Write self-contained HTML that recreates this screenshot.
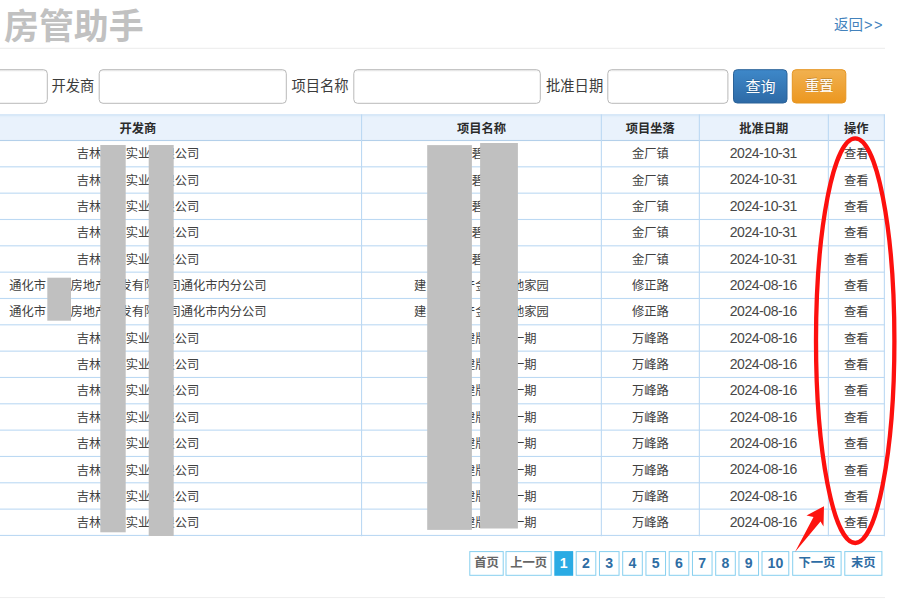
<!DOCTYPE html>
<html lang="zh-CN">
<head>
<meta charset="utf-8">
<title>房管助手</title>
<style>
html,body{margin:0;padding:0;background:#fff;}
body{width:900px;height:600px;overflow:hidden;position:relative;font-family:"Liberation Sans","Noto Sans CJK SC",sans-serif;color:#333;}
.abs{position:absolute;white-space:nowrap;transform-origin:0 0;}
.title{font-size:34.9px;font-weight:bold;color:#c1c1c1;line-height:50px;}
.back{font-size:14.5px;color:#4382bc;line-height:20px;}
.lbl{font-size:14.3px;color:#3c3c3c;line-height:20px;}
.btn{color:#fff;font-size:14.1px;line-height:32px;width:54px;text-align:center;text-shadow:0 -1px 0 rgba(0,0,0,.2);}
.c{position:absolute;text-align:center;white-space:nowrap;font-size:12.25px;line-height:26px;height:26px;color:#404040;transform-origin:0 0;}
.h{font-weight:bold;color:#2b2b2b;}
.d{font-size:14px;letter-spacing:-.45px;color:#474747;}
.pg{position:absolute;height:24px;text-align:center;font-size:12.3px;font-weight:bold;line-height:24px;color:#2e6da4;white-space:nowrap;transform-origin:0 0;}
.pg.n{font-size:14.1px;}
.pg.dis{color:#666;}
.pg.cur{color:#fff;}
svg{position:absolute;left:0;top:0;}
.fi{position:absolute;top:72px;height:28px;border:0;outline:0;padding:0;margin:0;background:transparent;font:inherit;font-size:14px;color:#555;}
</style>
</head>
<body>

<svg width="900" height="600" viewBox="0 0 900 600">
<defs>
<linearGradient id="gb" x1="0" y1="0" x2="0" y2="1"><stop offset="0" stop-color="#3e88c9"/><stop offset="1" stop-color="#2d6aa6"/></linearGradient>
<linearGradient id="go" x1="0" y1="0" x2="0" y2="1"><stop offset="0" stop-color="#f1b150"/><stop offset="1" stop-color="#ec971f"/></linearGradient>
<linearGradient id="gi" x1="0" y1="0" x2="0" y2="1"><stop offset="0" stop-color="#ececec"/><stop offset="0.08" stop-color="#ffffff"/><stop offset="1" stop-color="#ffffff"/></linearGradient>
</defs>
<rect x="0" y="47.8" width="885" height="1" fill="#ececec"/>
<rect x="0" y="597.1" width="885" height="1" fill="#eeeeee"/>
<rect x="-59.50" y="69.7" width="106.80" height="33.6" rx="3.8" fill="url(#gi)" stroke="#b9b9b9" stroke-width="1"/>
<rect x="99.20" y="69.7" width="187.10" height="33.6" rx="3.8" fill="url(#gi)" stroke="#b9b9b9" stroke-width="1"/>
<rect x="353.80" y="69.7" width="186.50" height="33.6" rx="3.8" fill="url(#gi)" stroke="#b9b9b9" stroke-width="1"/>
<rect x="607.80" y="69.7" width="120.10" height="33.6" rx="3.8" fill="url(#gi)" stroke="#b9b9b9" stroke-width="1"/>
<rect x="733.5" y="69.7" width="53.5" height="33.3" rx="3.8" fill="url(#gb)" stroke="#2b6298" stroke-width="1"/>
<rect x="792.3" y="69.7" width="53.5" height="33.3" rx="3.8" fill="url(#go)" stroke="#e59521" stroke-width="1"/>
<rect x="0" y="114.6" width="884.8" height="26" fill="#e9f2fc"/>
<rect x="0" y="114.4" width="884.8" height="1.2" fill="#c3dcf3"/>
<rect x="0" y="115.6" width="884.8" height="1.6" fill="#e3effb"/>
<rect x="0" y="139.95" width="884.8" height="1.1" fill="#b4d0ea"/>
<rect x="0" y="166.28" width="884.8" height="1.1" fill="#bcd9f3"/>
<rect x="0" y="192.61" width="884.8" height="1.1" fill="#bcd9f3"/>
<rect x="0" y="218.94" width="884.8" height="1.1" fill="#bcd9f3"/>
<rect x="0" y="245.27" width="884.8" height="1.1" fill="#bcd9f3"/>
<rect x="0" y="271.60" width="884.8" height="1.1" fill="#bcd9f3"/>
<rect x="0" y="297.93" width="884.8" height="1.1" fill="#bcd9f3"/>
<rect x="0" y="324.26" width="884.8" height="1.1" fill="#bcd9f3"/>
<rect x="0" y="350.59" width="884.8" height="1.1" fill="#bcd9f3"/>
<rect x="0" y="376.92" width="884.8" height="1.1" fill="#bcd9f3"/>
<rect x="0" y="403.25" width="884.8" height="1.1" fill="#bcd9f3"/>
<rect x="0" y="429.58" width="884.8" height="1.1" fill="#bcd9f3"/>
<rect x="0" y="455.91" width="884.8" height="1.1" fill="#bcd9f3"/>
<rect x="0" y="482.24" width="884.8" height="1.1" fill="#bcd9f3"/>
<rect x="0" y="508.57" width="884.8" height="1.1" fill="#bcd9f3"/>
<rect x="0" y="534.90" width="884.8" height="1.1" fill="#bcd9f3"/>
<rect x="361.00" y="114.4" width="1.1" height="421.85" fill="#bcd9f3"/>
<rect x="600.80" y="114.4" width="1.1" height="421.85" fill="#bcd9f3"/>
<rect x="698.80" y="114.4" width="1.1" height="421.85" fill="#bcd9f3"/>
<rect x="827.80" y="114.4" width="1.1" height="421.85" fill="#bcd9f3"/>
<rect x="883.80" y="114.4" width="1.1" height="421.85" fill="#bcd9f3"/>
<rect x="469.80" y="551.60" width="33.40" height="23.70" fill="#fff" stroke="#86cfef" stroke-width="1"/>
<rect x="506.00" y="551.60" width="45.20" height="23.70" fill="#fff" stroke="#86cfef" stroke-width="1"/>
<rect x="554.30" y="551.10" width="18.90" height="24.70" fill="#2aabe4"/>
<rect x="576.20" y="551.60" width="19.60" height="23.70" fill="#fff" stroke="#86cfef" stroke-width="1"/>
<rect x="599.45" y="551.60" width="19.60" height="23.70" fill="#fff" stroke="#86cfef" stroke-width="1"/>
<rect x="622.70" y="551.60" width="19.60" height="23.70" fill="#fff" stroke="#86cfef" stroke-width="1"/>
<rect x="645.95" y="551.60" width="19.60" height="23.70" fill="#fff" stroke="#86cfef" stroke-width="1"/>
<rect x="669.20" y="551.60" width="19.60" height="23.70" fill="#fff" stroke="#86cfef" stroke-width="1"/>
<rect x="692.45" y="551.60" width="19.60" height="23.70" fill="#fff" stroke="#86cfef" stroke-width="1"/>
<rect x="715.70" y="551.60" width="19.60" height="23.70" fill="#fff" stroke="#86cfef" stroke-width="1"/>
<rect x="738.95" y="551.60" width="19.60" height="23.70" fill="#fff" stroke="#86cfef" stroke-width="1"/>
<rect x="762.00" y="551.60" width="26.80" height="23.70" fill="#fff" stroke="#86cfef" stroke-width="1"/>
<rect x="792.70" y="551.60" width="48.40" height="23.70" fill="#fff" stroke="#86cfef" stroke-width="1"/>
<rect x="844.80" y="551.60" width="37.10" height="23.70" fill="#fff" stroke="#86cfef" stroke-width="1"/>
</svg>
<div class="abs title" style="left:4px;top:2px;transform:translate(0.00px,0.00px) rotate(.0002deg)">房管助手</div>
<div class="abs back" style="left:834px;top:14px;transform:translate(0.00px,0.50px) rotate(.0002deg)">返回<span style="letter-spacing:1.5px;margin-left:1px">&gt;&gt;</span></div>
<div class="abs lbl" style="left:51px;top:75px;transform:translate(0.50px,0.80px) rotate(.0002deg)">开发商</div>
<div class="abs lbl" style="left:291px;top:75px;transform:translate(0.40px,0.80px) rotate(.0002deg)">项目名称</div>
<div class="abs lbl" style="left:546px;top:75px;transform:translate(0.00px,0.80px) rotate(.0002deg)">批准日期</div>
<input class="fi" type="text" style="left:-54.0px;width:95.8px">
<input class="fi" type="text" style="left:104.7px;width:176.1px">
<input class="fi" type="text" style="left:359.3px;width:175.5px">
<input class="fi" type="text" style="left:613.3px;width:109.1px">
<div class="abs btn" style="left:733px;top:70px;transform:translate(0.50px,0.50px) rotate(.0002deg);font-size:15px">查询</div>
<div class="abs btn" style="left:792px;top:70px;transform:translate(0.30px,0.30px) rotate(.0002deg);font-size:14.3px">重置</div>
<div class="c h" style="left:-86px;top:115px;transform:translate(0.50px,0.70px) rotate(.0002deg);width:447.0px">开发商</div>
<div class="c h" style="left:361px;top:115px;transform:translate(0.50px,0.70px) rotate(.0002deg);width:239.8px">项目名称</div>
<div class="c h" style="left:601px;top:115px;transform:translate(0.30px,0.70px) rotate(.0002deg);width:98.0px">项目坐落</div>
<div class="c h" style="left:699px;top:115px;transform:translate(0.30px,0.70px) rotate(.0002deg);width:129.0px">批准日期</div>
<div class="c h" style="left:828px;top:115px;transform:translate(0.30px,0.70px) rotate(.0002deg);width:56.0px">操作</div>
<div class="c" style="left:-86px;top:141px;transform:translate(0.50px,0.30px) rotate(.0002deg);width:447.0px">吉林某某实业有限公司</div>
<div class="c" style="left:364px;top:141px;transform:translate(0.00px,0.30px) rotate(.0002deg);width:239.8px">某碧桂园</div>
<div class="c" style="left:601px;top:141px;transform:translate(0.30px,0.30px) rotate(.0002deg);width:98.0px">金厂镇</div>
<div class="c d" style="left:698px;top:140px;transform:translate(0.80px,0.10px) rotate(.0002deg);width:129.0px">2024-10-31</div>
<div class="c" style="left:828px;top:141px;transform:translate(0.30px,0.30px) rotate(.0002deg);width:56.0px">查看</div>
<div class="c" style="left:-86px;top:167px;transform:translate(0.50px,0.65px) rotate(.0002deg);width:447.0px">吉林某某实业有限公司</div>
<div class="c" style="left:364px;top:167px;transform:translate(0.00px,0.65px) rotate(.0002deg);width:239.8px">某碧桂园</div>
<div class="c" style="left:601px;top:167px;transform:translate(0.30px,0.65px) rotate(.0002deg);width:98.0px">金厂镇</div>
<div class="c d" style="left:698px;top:166px;transform:translate(0.80px,0.45px) rotate(.0002deg);width:129.0px">2024-10-31</div>
<div class="c" style="left:828px;top:167px;transform:translate(0.30px,0.65px) rotate(.0002deg);width:56.0px">查看</div>
<div class="c" style="left:-86px;top:194px;transform:translate(0.50px,0.00px) rotate(.0002deg);width:447.0px">吉林某某实业有限公司</div>
<div class="c" style="left:364px;top:194px;transform:translate(0.00px,0.00px) rotate(.0002deg);width:239.8px">某碧桂园</div>
<div class="c" style="left:601px;top:194px;transform:translate(0.30px,0.00px) rotate(.0002deg);width:98.0px">金厂镇</div>
<div class="c d" style="left:698px;top:192px;transform:translate(0.80px,0.80px) rotate(.0002deg);width:129.0px">2024-10-31</div>
<div class="c" style="left:828px;top:194px;transform:translate(0.30px,0.00px) rotate(.0002deg);width:56.0px">查看</div>
<div class="c" style="left:-86px;top:220px;transform:translate(0.50px,0.35px) rotate(.0002deg);width:447.0px">吉林某某实业有限公司</div>
<div class="c" style="left:364px;top:220px;transform:translate(0.00px,0.35px) rotate(.0002deg);width:239.8px">某碧桂园</div>
<div class="c" style="left:601px;top:220px;transform:translate(0.30px,0.35px) rotate(.0002deg);width:98.0px">金厂镇</div>
<div class="c d" style="left:698px;top:219px;transform:translate(0.80px,0.15px) rotate(.0002deg);width:129.0px">2024-10-31</div>
<div class="c" style="left:828px;top:220px;transform:translate(0.30px,0.35px) rotate(.0002deg);width:56.0px">查看</div>
<div class="c" style="left:-86px;top:246px;transform:translate(0.50px,0.70px) rotate(.0002deg);width:447.0px">吉林某某实业有限公司</div>
<div class="c" style="left:364px;top:246px;transform:translate(0.00px,0.70px) rotate(.0002deg);width:239.8px">某碧桂园</div>
<div class="c" style="left:601px;top:246px;transform:translate(0.30px,0.70px) rotate(.0002deg);width:98.0px">金厂镇</div>
<div class="c d" style="left:698px;top:245px;transform:translate(0.80px,0.50px) rotate(.0002deg);width:129.0px">2024-10-31</div>
<div class="c" style="left:828px;top:246px;transform:translate(0.30px,0.70px) rotate(.0002deg);width:56.0px">查看</div>
<div class="c" style="left:-86px;top:273px;transform:translate(0.50px,0.05px) rotate(.0002deg);width:447.0px">通化市　某房地产开发有限公司通化市内分公司</div>
<div class="c" style="left:361px;top:273px;transform:translate(0.50px,0.05px) rotate(.0002deg);width:239.8px">建　某某产金某某地家园</div>
<div class="c" style="left:601px;top:273px;transform:translate(0.30px,0.05px) rotate(.0002deg);width:98.0px">修正路</div>
<div class="c d" style="left:698px;top:271px;transform:translate(0.80px,0.85px) rotate(.0002deg);width:129.0px">2024-08-16</div>
<div class="c" style="left:828px;top:273px;transform:translate(0.30px,0.05px) rotate(.0002deg);width:56.0px">查看</div>
<div class="c" style="left:-86px;top:299px;transform:translate(0.50px,0.40px) rotate(.0002deg);width:447.0px">通化市　某房地产开发有限公司通化市内分公司</div>
<div class="c" style="left:361px;top:299px;transform:translate(0.50px,0.40px) rotate(.0002deg);width:239.8px">建　某某产金某某地家园</div>
<div class="c" style="left:601px;top:299px;transform:translate(0.30px,0.40px) rotate(.0002deg);width:98.0px">修正路</div>
<div class="c d" style="left:698px;top:298px;transform:translate(0.80px,0.20px) rotate(.0002deg);width:129.0px">2024-08-16</div>
<div class="c" style="left:828px;top:299px;transform:translate(0.30px,0.40px) rotate(.0002deg);width:56.0px">查看</div>
<div class="c" style="left:-86px;top:325px;transform:translate(0.50px,0.75px) rotate(.0002deg);width:447.0px">吉林某某实业有限公司</div>
<div class="c" style="left:361px;top:325px;transform:translate(0.50px,0.75px) rotate(.0002deg);width:239.8px">　某某建版某某一期</div>
<div class="c" style="left:601px;top:325px;transform:translate(0.30px,0.75px) rotate(.0002deg);width:98.0px">万峰路</div>
<div class="c d" style="left:698px;top:324px;transform:translate(0.80px,0.55px) rotate(.0002deg);width:129.0px">2024-08-16</div>
<div class="c" style="left:828px;top:325px;transform:translate(0.30px,0.75px) rotate(.0002deg);width:56.0px">查看</div>
<div class="c" style="left:-86px;top:352px;transform:translate(0.50px,0.10px) rotate(.0002deg);width:447.0px">吉林某某实业有限公司</div>
<div class="c" style="left:361px;top:352px;transform:translate(0.50px,0.10px) rotate(.0002deg);width:239.8px">　某某建版某某一期</div>
<div class="c" style="left:601px;top:352px;transform:translate(0.30px,0.10px) rotate(.0002deg);width:98.0px">万峰路</div>
<div class="c d" style="left:698px;top:350px;transform:translate(0.80px,0.90px) rotate(.0002deg);width:129.0px">2024-08-16</div>
<div class="c" style="left:828px;top:352px;transform:translate(0.30px,0.10px) rotate(.0002deg);width:56.0px">查看</div>
<div class="c" style="left:-86px;top:378px;transform:translate(0.50px,0.45px) rotate(.0002deg);width:447.0px">吉林某某实业有限公司</div>
<div class="c" style="left:361px;top:378px;transform:translate(0.50px,0.45px) rotate(.0002deg);width:239.8px">　某某建版某某一期</div>
<div class="c" style="left:601px;top:378px;transform:translate(0.30px,0.45px) rotate(.0002deg);width:98.0px">万峰路</div>
<div class="c d" style="left:698px;top:377px;transform:translate(0.80px,0.25px) rotate(.0002deg);width:129.0px">2024-08-16</div>
<div class="c" style="left:828px;top:378px;transform:translate(0.30px,0.45px) rotate(.0002deg);width:56.0px">查看</div>
<div class="c" style="left:-86px;top:404px;transform:translate(0.50px,0.80px) rotate(.0002deg);width:447.0px">吉林某某实业有限公司</div>
<div class="c" style="left:361px;top:404px;transform:translate(0.50px,0.80px) rotate(.0002deg);width:239.8px">　某某建版某某一期</div>
<div class="c" style="left:601px;top:404px;transform:translate(0.30px,0.80px) rotate(.0002deg);width:98.0px">万峰路</div>
<div class="c d" style="left:698px;top:403px;transform:translate(0.80px,0.60px) rotate(.0002deg);width:129.0px">2024-08-16</div>
<div class="c" style="left:828px;top:404px;transform:translate(0.30px,0.80px) rotate(.0002deg);width:56.0px">查看</div>
<div class="c" style="left:-86px;top:431px;transform:translate(0.50px,0.15px) rotate(.0002deg);width:447.0px">吉林某某实业有限公司</div>
<div class="c" style="left:361px;top:431px;transform:translate(0.50px,0.15px) rotate(.0002deg);width:239.8px">　某某建版某某一期</div>
<div class="c" style="left:601px;top:431px;transform:translate(0.30px,0.15px) rotate(.0002deg);width:98.0px">万峰路</div>
<div class="c d" style="left:698px;top:429px;transform:translate(0.80px,0.95px) rotate(.0002deg);width:129.0px">2024-08-16</div>
<div class="c" style="left:828px;top:431px;transform:translate(0.30px,0.15px) rotate(.0002deg);width:56.0px">查看</div>
<div class="c" style="left:-86px;top:457px;transform:translate(0.50px,0.50px) rotate(.0002deg);width:447.0px">吉林某某实业有限公司</div>
<div class="c" style="left:361px;top:457px;transform:translate(0.50px,0.50px) rotate(.0002deg);width:239.8px">　某某建版某某一期</div>
<div class="c" style="left:601px;top:457px;transform:translate(0.30px,0.50px) rotate(.0002deg);width:98.0px">万峰路</div>
<div class="c d" style="left:698px;top:456px;transform:translate(0.80px,0.30px) rotate(.0002deg);width:129.0px">2024-08-16</div>
<div class="c" style="left:828px;top:457px;transform:translate(0.30px,0.50px) rotate(.0002deg);width:56.0px">查看</div>
<div class="c" style="left:-86px;top:483px;transform:translate(0.50px,0.85px) rotate(.0002deg);width:447.0px">吉林某某实业有限公司</div>
<div class="c" style="left:361px;top:483px;transform:translate(0.50px,0.85px) rotate(.0002deg);width:239.8px">　某某建版某某一期</div>
<div class="c" style="left:601px;top:483px;transform:translate(0.30px,0.85px) rotate(.0002deg);width:98.0px">万峰路</div>
<div class="c d" style="left:698px;top:482px;transform:translate(0.80px,0.65px) rotate(.0002deg);width:129.0px">2024-08-16</div>
<div class="c" style="left:828px;top:483px;transform:translate(0.30px,0.85px) rotate(.0002deg);width:56.0px">查看</div>
<div class="c" style="left:-86px;top:510px;transform:translate(0.50px,0.20px) rotate(.0002deg);width:447.0px">吉林某某实业有限公司</div>
<div class="c" style="left:361px;top:510px;transform:translate(0.50px,0.20px) rotate(.0002deg);width:239.8px">　某某建版某某一期</div>
<div class="c" style="left:601px;top:510px;transform:translate(0.30px,0.20px) rotate(.0002deg);width:98.0px">万峰路</div>
<div class="c d" style="left:698px;top:509px;transform:translate(0.80px,0.00px) rotate(.0002deg);width:129.0px">2024-08-16</div>
<div class="c" style="left:828px;top:510px;transform:translate(0.30px,0.20px) rotate(.0002deg);width:56.0px">查看</div>
<div class="pg dis" style="left:469px;top:551px;transform:translate(0.30px,0.10px) rotate(.0002deg);width:34.4px">首页</div>
<div class="pg dis" style="left:505px;top:551px;transform:translate(0.50px,0.10px) rotate(.0002deg);width:46.2px">上一页</div>
<div class="pg cur n" style="left:554px;top:551px;transform:translate(0.30px,0.40px) rotate(.0002deg);width:18.9px">1</div>
<div class="pg n" style="left:575px;top:551px;transform:translate(0.70px,0.40px) rotate(.0002deg);width:20.6px">2</div>
<div class="pg n" style="left:598px;top:551px;transform:translate(0.95px,0.40px) rotate(.0002deg);width:20.6px">3</div>
<div class="pg n" style="left:622px;top:551px;transform:translate(0.20px,0.40px) rotate(.0002deg);width:20.6px">4</div>
<div class="pg n" style="left:645px;top:551px;transform:translate(0.45px,0.40px) rotate(.0002deg);width:20.6px">5</div>
<div class="pg n" style="left:668px;top:551px;transform:translate(0.70px,0.40px) rotate(.0002deg);width:20.6px">6</div>
<div class="pg n" style="left:691px;top:551px;transform:translate(0.95px,0.40px) rotate(.0002deg);width:20.6px">7</div>
<div class="pg n" style="left:715px;top:551px;transform:translate(0.20px,0.40px) rotate(.0002deg);width:20.6px">8</div>
<div class="pg n" style="left:738px;top:551px;transform:translate(0.45px,0.40px) rotate(.0002deg);width:20.6px">9</div>
<div class="pg n" style="left:761px;top:551px;transform:translate(0.50px,0.40px) rotate(.0002deg);width:27.8px">10</div>
<div class="pg " style="left:792px;top:551px;transform:translate(0.20px,0.10px) rotate(.0002deg);width:49.4px">下一页</div>
<div class="pg " style="left:844px;top:551px;transform:translate(0.30px,0.10px) rotate(.0002deg);width:38.1px">末页</div>
<svg width="900" height="600" viewBox="0 0 900 600">
<rect x="100.3" y="145" width="25.4" height="387.3" fill="#c0c0c0"/>
<rect x="148.7" y="145" width="25" height="391" fill="#c0c0c0"/>
<rect x="47.3" y="277.7" width="23.7" height="43" fill="#c0c0c0"/>
<rect x="427.2" y="145.1" width="44.7" height="384.8" fill="#c0c0c0"/>
<rect x="480.1" y="143" width="37.8" height="385.5" fill="#c0c0c0"/>
<ellipse cx="855.2" cy="340.7" rx="39.2" ry="202.3" fill="none" stroke="#fd100e" stroke-width="4.3"/>
<polygon points="824,506.2 806.5,515.5 813.5,517 795,552 820.5,521.5 823.5,526.5" fill="#fd140f"/>
</svg>
</body></html>
